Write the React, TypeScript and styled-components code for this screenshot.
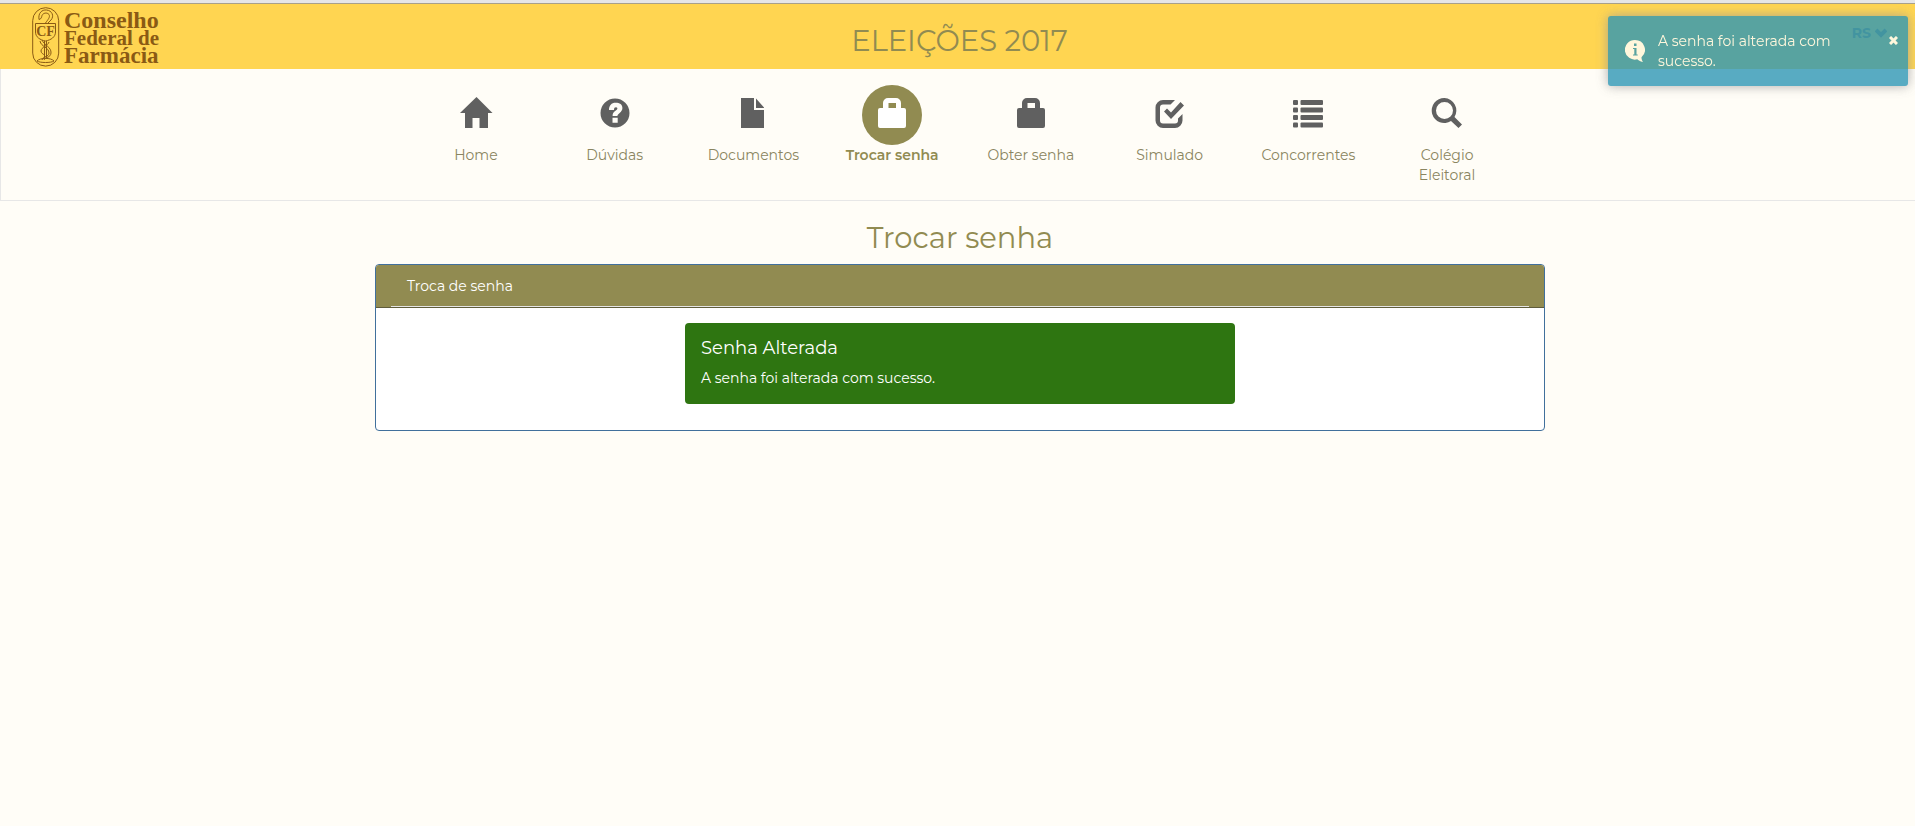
import React from 'react';
import styled, { createGlobalStyle } from 'styled-components';

const olive = '#918b51';
const brown = '#8a5a14';

const GlobalStyle = createGlobalStyle`
  *, *::before, *::after { box-sizing: border-box; }
  body {
    margin: 0;
    background: #fffdf7;
    color: ${olive};
    font-family: Montserrat, Inter, "Liberation Sans", sans-serif;
    font-size: 14px;
    line-height: 20px;
    overflow-x: hidden;
  }
  h1, h2, h3, h4, p, ul { margin: 0; padding: 0; font-weight: 400; }
`;

const Header = styled.header`
  display: grid;
  grid-template-columns: 1fr auto 1fr;
  align-items: center;
  height: 69px;
  padding: 2px 28px 0 32px;
  border-top: 3px solid #e6e6e6;
  background: linear-gradient(#a8a08a 0 1px, #ffd551 1px);
`;

const Brand = styled.a`
  display: flex;
  align-items: center;
  gap: 4px;
  color: ${brown};
  text-decoration: none;
`;

const BrandText = styled.span`
  display: flex;
  flex-direction: column;
  padding-top: 2px;
  font-family: "Liberation Serif", serif;
  font-weight: 700;
`;

const BrandLine = styled.span<{ $size: number }>`
  font-size: ${(p) => p.$size}px;
  line-height: 18px;
`;

const SiteTitle = styled.h1`
  padding-top: 8px;
  font-size: 29px;
  line-height: 32px;
`;

const RegionButton = styled.button`
  display: flex;
  align-items: center;
  justify-self: end;
  align-self: start;
  gap: 4px;
  margin-top: 18px;
  padding: 0;
  border: 0;
  background: none;
  color: ${olive};
  font: inherit;
  font-weight: 700;
`;

const Nav = styled.nav`
  padding-left: 7px;
  border: 1px solid #e7e7e7;
  border-top: 0;
  border-right: 0;
`;

const NavList = styled.ul`
  display: grid;
  grid-template-columns: repeat(8, 1fr);
  max-width: 1110px;
  margin: 0 auto;
  padding: 16px 0 15px;
  list-style: none;
`;

const NavLink = styled.a<{ $active: boolean }>`
  display: flex;
  flex-direction: column;
  align-items: center;
  padding: 0 20px;
  color: ${(p) => (p.$active ? olive : '#8a8560')};
  text-align: center;
  text-decoration: none;
  font-weight: ${(p) => (p.$active ? 600 : 400)};
`;

const NavIcon = styled.span<{ $active: boolean }>`
  display: grid;
  place-items: center;
  width: 60px;
  height: 60px;
  padding-bottom: 4px;
  border-radius: 50%;
  background: ${(p) => (p.$active ? olive : 'transparent')};
  color: ${(p) => (p.$active ? '#fff' : '#606060')};
`;

const Content = styled.div`
  padding-left: 5px;
`;

const Main = styled.main`
  max-width: 1170px;
  margin: 0 auto;
  padding-top: 20px;
`;

const PageTitle = styled.h2`
  margin-bottom: 10px;
  font-size: 29px;
  line-height: 33px;
  text-align: center;
`;

const Panel = styled.section`
  border: 1px solid #41709c;
  border-radius: 4px;
  background: #fff;
  overflow: hidden;
`;

const PanelHeader = styled.header`
  padding: 0 15px;
  border-bottom: 1px solid #5f5c3c;
  background: ${olive};
`;

const PanelTitle = styled.h3`
  padding: 11px 16px 10px;
  border-bottom: 1px solid #e5e5e5;
  color: #fff;
  font-size: 14px;
  line-height: 20px;
`;

const PanelBody = styled.div`
  display: flex;
  justify-content: center;
  padding: 15px 15px 26px;
`;

const Notice = styled.div`
  width: 550px;
  padding: 15px 16px;
  border-radius: 4px;
  background: #2e7511;
  color: #fff;
`;

const NoticeTitle = styled.h4`
  margin-bottom: 10px;
  font-size: 18px;
  line-height: 20px;
`;

const NoticeText = styled.p`
  padding-bottom: 1px;
`;

const Toast = styled.div`
  position: fixed;
  top: 16px;
  right: 7px;
  display: flex;
  align-items: center;
  gap: 13px;
  width: 300px;
  padding: 15px 10px 15px 17px;
  border-radius: 3px;
  background: #2f96b4;
  color: #fff;
  box-shadow: 0 0 12px #999;
  opacity: 0.8;
`;

const ToastMessage = styled.p`
  flex: 1;
`;

const ToastClose = styled.button`
  display: flex;
  align-self: flex-start;
  margin-top: 5px;
  padding: 0;
  border: 0;
  background: none;
  color: #fff;
`;

const icons: Record<string, React.ReactNode> = {
  home: (
    <path d="M17.5 0 L33.5 16 H29 V31 H20.5 V21 H13.5 V31 H6 V16 H1 Z" />
  ),
  question: (
    <path
      fillRule="evenodd"
      d="M17 1.5a14.5 14.5 0 1 1 0 29a14.5 14.5 0 0 1 0-29zM14.500 20.800v5h5.200v-5zM11 13h5c0-2 .7-2.700 2-2.700c1.100 0 1.600.7 1.300 1.700c-.4 1.300-2.300 1.800-3.500 3.300c-.9 1.100-1.200 2-1.200 3.800h4.800c0-1.500 1-2 2.500-3.400c1.500-1.300 2.500-2.700 2.500-4.700c0-3.300-2.600-5.200-6.900-5.200c-4 0-6.500 2.700-6.500 7.200z"
    />
  ),
  file: <path d="M5 1H18V13H28V31H5ZM20 1.500L28 10.500V11H20Z" />,
  lock: (
    <path
      fillRule="evenodd"
      d="M8 6a5 5 0 0 1 5-5h8a5 5 0 0 1 5 5v5h3a2 2 0 0 1 2 2v16a2 2 0 0 1-2 2H5a2 2 0 0 1-2-2V13a2 2 0 0 1 2-2h3zM13.500 6V11h7.500V6z"
    />
  ),
  check: (
    <>
      <path d="M22 3H10a7.500 7.500 0 0 0-7.500 7.500v13A7.500 7.500 0 0 0 10 31h12a7.500 7.500 0 0 0 7.500-7.500V17L25 21.500V23.500a3 3 0 0 1-3 3H10a3 3 0 0 1-3-3v-13a3 3 0 0 1 3-3h7.500z" />
      <path d="M11 14.500l3-3 4 4L27.500 5l3.500 3.500L18 22z" />
    </>
  ),
  list: (
    <>
      {[3, 10.5, 18, 25.5].map((y) => (
        <g key={y}>
          <rect x="2" y={y} width="5" height="5" rx="1" />
          <rect x="9.500" y={y} width="22.500" height="5" rx="1" />
        </g>
      ))}
    </>
  ),
  search: (
    <path
      fillRule="evenodd"
      d="M14.500 1a12.500 12.500 0 1 0 6.500 23l7.500 7l3.500-3.500l-7.500-7.500A12.500 12.500 0 0 0 14.500 1zM14.500 5a8.500 8.500 0 1 1 0 17a8.500 8.500 0 0 1 0-17z"
    />
  ),
};

const items = [
  { label: 'Home', icon: 'home' },
  { label: 'Dúvidas', icon: 'question' },
  { label: 'Documentos', icon: 'file' },
  { label: 'Trocar senha', icon: 'lock', active: true },
  { label: 'Obter senha', icon: 'lock' },
  { label: 'Simulado', icon: 'check' },
  { label: 'Concorrentes', icon: 'list' },
  { label: 'Colégio Eleitoral', icon: 'search' },
];

const Monogram = styled.text`
  font: 700 14px "Liberation Serif", serif;
  text-anchor: middle;
  fill: ${brown};
  stroke: none;
`;

function Emblem() {
  return (
    <svg width="28" height="60" viewBox="0 0 28 60" fill="none" stroke={brown} strokeWidth="1" aria-hidden="true">
      <rect x="0.700" y="0.700" width="26" height="58.400" rx="13" />
      <path d="M3.500 16.500H23.500V25C23.500 30 19 33 13.500 34C8 33 3.500 30 3.500 25Z" />
      <path d="M7 12.500C6 6 10 2.500 14.500 3C20 3.500 22.500 9 19 13L16 16M7 12.500C9.500 12 9.500 10 10 8.500C11 6 15 5 17 7.500C18.500 10 16 12.500 13.500 16" />
      <path d="M12.500 34V51M14.500 34V51" />
      <path d="M8 34C9 40 17 40 17 46C17 50 11 49 10 53M10 33C12 38 19.500 40 19 46C18.500 51 13 50 12 53M17 35C16 39 9 40 9 44C9 46 11 47 12.500 48" />
      <path d="M5 54C8 50.500 19 50.500 22 54C19 56 8 56 5 54Z" />
      <Monogram x="13.500" y="29">CF</Monogram>
    </svg>
  );
}

export default function App() {
  return (
    <>
      <GlobalStyle />
      <Header>
        <Brand href="#" aria-label="Conselho Federal de Farmácia">
          <Emblem />
          <BrandText>
            <BrandLine $size={24}>Conselho</BrandLine>
            <BrandLine $size={21}>Federal de</BrandLine>
            <BrandLine $size={23}>Farmácia</BrandLine>
          </BrandText>
        </Brand>
        <SiteTitle>ELEIÇÕES 2017</SiteTitle>
        <RegionButton type="button">
          RS
          <svg width="12" height="10" viewBox="0 0 12 10" fill="none" stroke="currentColor" strokeWidth="4" aria-hidden="true">
            <path d="M1 2L6 7L11 2" />
          </svg>
        </RegionButton>
      </Header>
      <Nav>
        <NavList>
          {items.map(({ label, icon, active = false }) => (
            <li key={label}>
              <NavLink href="#" $active={active} aria-current={active ? 'page' : undefined}>
                <NavIcon $active={active}>
                  <svg width="34" height="32" viewBox="0 0 34 32" fill="currentColor" aria-hidden="true">
                    {icons[icon]}
                  </svg>
                </NavIcon>
                {label}
              </NavLink>
            </li>
          ))}
        </NavList>
      </Nav>
      <Content>
        <Main>
          <PageTitle>Trocar senha</PageTitle>
          <Panel>
            <PanelHeader>
              <PanelTitle>Troca de senha</PanelTitle>
            </PanelHeader>
            <PanelBody>
              <Notice>
                <NoticeTitle>Senha Alterada</NoticeTitle>
                <NoticeText>A senha foi alterada com sucesso.</NoticeText>
              </Notice>
            </PanelBody>
          </Panel>
        </Main>
      </Content>
      <Toast role="status">
        <svg width="20" height="24" viewBox="0 0 20 24" aria-hidden="true">
          <path fill="currentColor" d="M10 1a10 9.800 0 0 1 6.500 17.200c0 2 .5 3.300 1.500 4.800c-3-.6-4.700-1.800-5.700-2.700A10 9.800 0 1 1 10 1z" />
          <path fill="#2f96b4" d="M9 4.500h2.500v2.500H9zM8 9h3.500v6.500h1.200v1H8v-1h1.300v-5.500H8z" />
        </svg>
        <ToastMessage>A senha foi alterada com sucesso.</ToastMessage>
        <ToastClose type="button" aria-label="Fechar">
          <svg width="9" height="9" viewBox="0 0 9 9" stroke="currentColor" strokeWidth="3" aria-hidden="true">
            <path d="M1 1L8 8M8 1L1 8" />
          </svg>
        </ToastClose>
      </Toast>
    </>
  );
}
